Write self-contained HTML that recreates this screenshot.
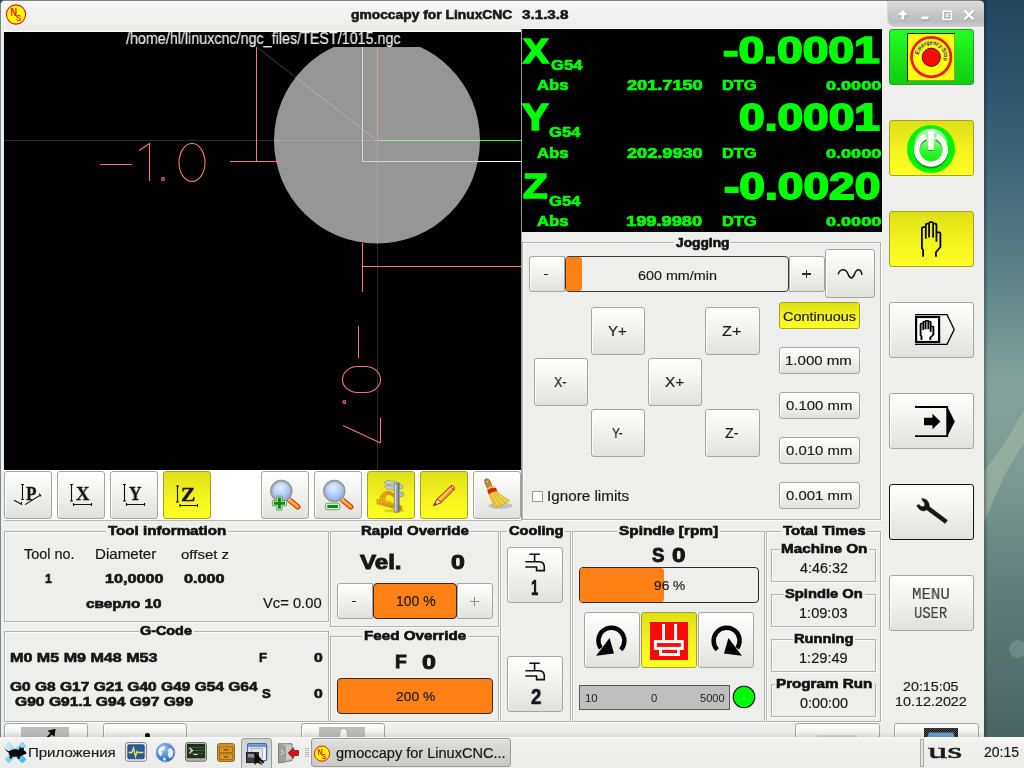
<!DOCTYPE html>
<html><head><meta charset="utf-8"><title>gmoccapy for LinuxCNC 3.1.3.8</title>
<style>
html,body{margin:0;padding:0}
body{width:1024px;height:768px;overflow:hidden;position:relative;font-family:"Liberation Sans",sans-serif;
 background:linear-gradient(180deg,#23475e 0px,#2c536a 80px,#4f7680 230px,#84a19b 384px,#7e9a94 470px,#5f7c79 600px,#4a6462 737px)}
div,span.t,svg.s{position:absolute;box-sizing:border-box}
span.t{white-space:nowrap;transform-origin:0 0;will-change:transform}
.b{border:1px solid #a6a69e;border-radius:3px}
.g{background:linear-gradient(180deg,#ffffff 0%,#f4f4f2 40%,#e0e0dc 100%);box-shadow:inset 1px 1px 0 rgba(255,255,255,.85)}
.y{background:linear-gradient(180deg,#dfdf18 0%,#f2f21e 50%,#ffff24 100%);border-color:#a4a420}
.gr{background:linear-gradient(180deg,#22ff22 0%,#18e018 60%,#12cc12 100%);border-color:#2f9a2f}
.fr{border:1px solid #b3b3ab;box-shadow:inset 1px 1px 0 #fbfbfa,1px 1px 0 #fbfbfa}
</style></head>
<body>
<svg class="s" style="left:984px;top:0px;" width="40" height="737" viewBox="0 0 40 737"><defs><linearGradient id="sh" x1="0" x2="1" y1="0" y2="0"><stop offset="0" stop-color="#000" stop-opacity=".3"/><stop offset="1" stop-color="#000" stop-opacity="0"/></linearGradient></defs>
<path d="M40 410Q30 428 21 441.700T0 471.500V523.500Q8 503 17 483T40 444Z" fill="#9cb3a2" opacity=".72"/>
<circle cx="34" cy="649" r="9" fill="#8fa5a0" opacity=".45"/>
<rect x="0" y="0" width="4" height="737" fill="url(#sh)"/></svg>
<div class="" style="left:0px;top:0px;width:984px;height:737px;background:#eeeeec;border-left:1px solid #76868e;border-top:1px solid #808080;border-radius:5px 6px 0 0"></div>
<div class="" style="left:1px;top:1px;width:983px;height:28px;background:linear-gradient(180deg,#f7f7f7,#ececeb);border-radius:4px 5px 0 0"></div>
<div class="" style="left:888px;top:1px;width:96px;height:26px;background:linear-gradient(180deg,#dcdcdc 0%,#c4c4c4 55%,#bdbdbd 80%,#cfcfcf 100%);border-radius:0 4px 0 7px;box-shadow:0 1px 0 #fafafa,-1px 0 0 #d9d9d9"></div>
<svg class="s" style="left:888px;top:0px;" width="96" height="28" viewBox="0 0 96 28"><g fill="none" stroke="#9a9a9a" stroke-width="1" transform="translate(.6,.8)" opacity=".8">
<path d="M14.9 19.8v-5.6" stroke-width="3.600"/><path d="M9.200 15.800L14.900 9.200 20.600 15.800Z" fill="#9a9a9a" stroke="none"/><rect x="33.5" y="16.7" width="7" height="2.6" fill="#9a9a9a"/><rect x="55.3" y="11.2" width="8.2" height="8.2" stroke-width="1.8"/><rect x="58" y="14" width="2.8" height="2.8" stroke-width=".9"/><path d="M76.5 10.5l9 9M85.500 10.5l-9 9" stroke-width="2.6"/></g>
<g fill="none" stroke="#fff">
<path d="M14.9 19.6v-5.6" stroke-width="2.800"/><path d="M9.900 15.300L14.900 9.700 19.900 15.300Z" fill="#fff" stroke="none"/><rect x="33.400" y="16.500" width="7.200" height="2.800" fill="#fff" stroke="none"/><rect x="55.300" y="11.200" width="8.200" height="8.200" stroke-width="1.700"/><rect x="58.200" y="14.100" width="2.500" height="2.500" stroke-width=".8"/><path d="M76.500 10.500l9 9M85.500 10.500l-9 9" stroke-width="2.300"/></g></svg>
<svg class="s" style="left:5px;top:4px;" width="22" height="22" viewBox="0 0 22 22"><circle cx="11" cy="10.500" r="9.600" fill="#ffff00" stroke="#f01010" stroke-width="1.100"/>
<text x="5.600" y="11.700" font-family="Liberation Sans" font-weight="bold" font-size="10.800" fill="#f01010" textLength="6.600" lengthAdjust="spacingAndGlyphs">N</text>
<text x="10.800" y="16.800" font-family="Liberation Sans" font-weight="bold" font-size="9.800" fill="#f01010" textLength="5.600" lengthAdjust="spacingAndGlyphs">S</text></svg>
<span class="t" style="left:351.03px;top:9px;font:bold 12.0px/1 'Liberation Sans',sans-serif;color:#1a1a1a;transform:scaleX(1.1518);-webkit-text-stroke:0.57px #1a1a1a;">gmoccapy for LinuxCNC</span>
<span class="t" style="left:521.51px;top:9px;font:bold 12.0px/1 'Liberation Sans',sans-serif;color:#1a1a1a;transform:scaleX(1.2674);-webkit-text-stroke:0.57px #1a1a1a;">3.1.3.8</span>
<div class="" style="left:4px;top:31px;width:517px;height:1px;background:#fcfcfc"></div>
<div class="" style="left:521px;top:29px;width:1px;height:491px;background:#9c9c98"></div>
<svg class="s" style="left:4px;top:32px;" width="517" height="438" viewBox="0 0 517 438"><rect width="517" height="438" fill="#000"/>
<defs><clipPath id="cc"><rect x="0" y="15" width="517" height="423"/></clipPath>
<clipPath id="ci"><circle cx="373" cy="108.500" r="103"/></clipPath></defs>
<g clip-path="url(#cc)" shape-rendering="crispEdges">
 <!-- dim cross lines on black -->
 <rect x="0" y="108" width="517" height="1" fill="#2c2c2c"/>
 <rect x="373" y="0" width="1" height="438" fill="#2c2c2c"/>
 <path d="M250 13 L373 108.500" stroke="#1b3131" stroke-width="1.200" fill="none" shape-rendering="auto"/>
 <circle cx="373" cy="108.500" r="103" fill="#969696" shape-rendering="auto"/>
 <g clip-path="url(#ci)">
  <rect x="0" y="108" width="517" height="1" fill="#a6a6a6"/>
  <rect x="373" y="0" width="1" height="438" fill="#a6a6a6"/>
 </g>
</g>
<g clip-path="url(#cc)" fill="none">
 <!-- diagonal teal line -->
 <path d="M250 13 L373 108.500" stroke="#a3aaa8" stroke-width="1.300" clip-path="url(#ci)"/>
 <g shape-rendering="crispEdges">
 <!-- white limit lines -->
 <path d="M358.500 15V129.500H517" stroke="#ffffff" stroke-width="1"/>
 <path d="M358.500 15V129.500H517" stroke="#d4d4d4" stroke-width="1" clip-path="url(#ci)"/>
 <!-- axis lines -->
 <path d="M373.500 15V108.500" stroke="#cfa2a2" stroke-width="1"/>
 <path d="M373.500 108.500H517" stroke="#33ff33" stroke-width="1"/>
 <path d="M373.500 108.500H517" stroke="#9fe59f" stroke-width="1" clip-path="url(#ci)"/>
 <!-- pink dimension lines -->
 <g stroke="#f27a7a" stroke-width="1">
  <path d="M252.500 15V129.500M226 129.500H279"/>
  <path d="M96 132.500H128"/>
  <path d="M358.500 211V260M358.500 234.500H517"/>
  <path d="M354.500 294V326"/>
  <path d="M376.500 386V411"/>
 </g></g>
 <g stroke="#f27a7a" stroke-width="1.100">
  <path d="M135 118.500L145.500 111.500V149"/>
  <circle cx="159" cy="147" r="1.400"/>
  <ellipse cx="188" cy="130.500" rx="13" ry="19"/>
  <rect x="338.500" y="334.500" width="38" height="26" rx="15" ry="13"/>
  <circle cx="340.300" cy="370" r="1.400"/>
  <path d="M339 393.500L376.500 411"/>
 </g>
</g></svg>
<span class="t" style="left:125.70px;top:31px;font:normal 16.0px/1 'Liberation Sans',sans-serif;color:#ececec;transform:scaleX(0.8949);-webkit-text-stroke:0.19px #ececec;">/home/hl/linuxcnc/ngc_files/TEST/1015.ngc</span>
<div class="" style="left:522px;top:28px;width:360px;height:1px;background:#fafafa"></div>
<div class="" style="left:522px;top:29px;width:360px;height:203px;background:#000"></div>
<span class="t" style="left:523.26px;top:34px;font:bold 35.5px/1 'Liberation Sans',sans-serif;color:#00ff00;transform:scaleX(1.0881);-webkit-text-stroke:1.68px #00ff00;">X</span>
<span class="t" style="left:551.17px;top:58px;font:bold 14.0px/1 'Liberation Sans',sans-serif;color:#00ff00;transform:scaleX(1.1856);-webkit-text-stroke:0.68px #00ff00;">G54</span>
<span class="t" style="left:723.02px;top:33px;font:bold 36.25px/1 'Liberation Sans',sans-serif;color:#00ff00;transform:scaleX(1.2748);-webkit-text-stroke:1.74px #00ff00;">-0.0001</span>
<span class="t" style="left:537.23px;top:78px;font:bold 14.75px/1 'Liberation Sans',sans-serif;color:#00ff00;transform:scaleX(1.1293);-webkit-text-stroke:0.70px #00ff00;">Abs</span>
<span class="t" style="left:626.61px;top:78px;font:bold 14.25px/1 'Liberation Sans',sans-serif;color:#00ff00;transform:scaleX(1.2735);-webkit-text-stroke:0.69px #00ff00;">201.7150</span>
<span class="t" style="left:721.79px;top:78px;font:bold 14.75px/1 'Liberation Sans',sans-serif;color:#00ff00;transform:scaleX(1.1100);-webkit-text-stroke:0.70px #00ff00;">DTG</span>
<span class="t" style="left:826.40px;top:79px;font:bold 13.25px/1 'Liberation Sans',sans-serif;color:#00ff00;transform:scaleX(1.3640);-webkit-text-stroke:0.64px #00ff00;">0.0000</span>
<span class="t" style="left:522.26px;top:100px;font:bold 36.0px/1 'Liberation Sans',sans-serif;color:#00ff00;transform:scaleX(1.1065);-webkit-text-stroke:1.70px #00ff00;">Y</span>
<span class="t" style="left:549.17px;top:126px;font:bold 13.75px/1 'Liberation Sans',sans-serif;color:#00ff00;transform:scaleX(1.2077);-webkit-text-stroke:0.66px #00ff00;">G54</span>
<span class="t" style="left:738.64px;top:100px;font:bold 36.75px/1 'Liberation Sans',sans-serif;color:#00ff00;transform:scaleX(1.2541);-webkit-text-stroke:1.77px #00ff00;">0.0001</span>
<span class="t" style="left:537.23px;top:146px;font:bold 14.75px/1 'Liberation Sans',sans-serif;color:#00ff00;transform:scaleX(1.1293);-webkit-text-stroke:0.70px #00ff00;">Abs</span>
<span class="t" style="left:626.61px;top:146px;font:bold 14.25px/1 'Liberation Sans',sans-serif;color:#00ff00;transform:scaleX(1.2735);-webkit-text-stroke:0.69px #00ff00;">202.9930</span>
<span class="t" style="left:721.79px;top:146px;font:bold 14.75px/1 'Liberation Sans',sans-serif;color:#00ff00;transform:scaleX(1.1100);-webkit-text-stroke:0.70px #00ff00;">DTG</span>
<span class="t" style="left:826.40px;top:147px;font:bold 13.25px/1 'Liberation Sans',sans-serif;color:#00ff00;transform:scaleX(1.3640);-webkit-text-stroke:0.64px #00ff00;">0.0000</span>
<span class="t" style="left:523.13px;top:169px;font:bold 35.5px/1 'Liberation Sans',sans-serif;color:#00ff00;transform:scaleX(1.1330);-webkit-text-stroke:1.68px #00ff00;">Z</span>
<span class="t" style="left:549.17px;top:194px;font:bold 14.0px/1 'Liberation Sans',sans-serif;color:#00ff00;transform:scaleX(1.1859);-webkit-text-stroke:0.67px #00ff00;">G54</span>
<span class="t" style="left:724.05px;top:168px;font:bold 37.0px/1 'Liberation Sans',sans-serif;color:#00ff00;transform:scaleX(1.2462);-webkit-text-stroke:1.78px #00ff00;">-0.0020</span>
<span class="t" style="left:537.23px;top:214px;font:bold 14.75px/1 'Liberation Sans',sans-serif;color:#00ff00;transform:scaleX(1.1293);-webkit-text-stroke:0.70px #00ff00;">Abs</span>
<span class="t" style="left:626.15px;top:214px;font:bold 14.5px/1 'Liberation Sans',sans-serif;color:#00ff00;transform:scaleX(1.2592);-webkit-text-stroke:0.69px #00ff00;">199.9980</span>
<span class="t" style="left:721.79px;top:214px;font:bold 14.75px/1 'Liberation Sans',sans-serif;color:#00ff00;transform:scaleX(1.1100);-webkit-text-stroke:0.70px #00ff00;">DTG</span>
<span class="t" style="left:826.40px;top:215px;font:bold 13.25px/1 'Liberation Sans',sans-serif;color:#00ff00;transform:scaleX(1.3640);-webkit-text-stroke:0.64px #00ff00;">0.0000</span>
<div class="b gr" style="left:889px;top:29px;width:85px;height:56px;"></div>
<svg class="s" style="left:907px;top:33px;" width="48" height="48" viewBox="0 0 48 48"><rect x=".5" y=".5" width="47.300" height="47.300" fill="#ffff10" stroke="#6a6a10" stroke-width=".8"/><path d="M.5 48V.5H48" fill="none" stroke="#1a1a00" stroke-width="1.100"/>
<circle cx="24.200" cy="24.100" r="19.700" fill="none" stroke="#f41414" stroke-width="2.700"/>
<circle cx="24.300" cy="24.300" r="9.100" fill="#fb0a0a" stroke="#4a1010" stroke-width="1"/>
<defs><path id="ep" d="M11.690 21.900A12.700 12.700 0 1 1 35.200 30.450"/></defs>
<text font-family="Liberation Sans" font-weight="bold" font-size="5.900" fill="#26268c"><textPath href="#ep" startOffset="0.3" textLength="40.500" lengthAdjust="spacingAndGlyphs">Emergency-Stop</textPath></text></svg>
<div class="b y" style="left:889px;top:120px;width:85px;height:56px;"></div>
<svg class="s" style="left:905px;top:123px;" width="52" height="52" viewBox="0 0 52 52"><defs><linearGradient id="pg" x1="0" y1="0" x2="0" y2="1"><stop offset="0" stop-color="#a8ffa8"/><stop offset=".5" stop-color="#3cf83c"/><stop offset="1" stop-color="#00f000"/></linearGradient>
<linearGradient id="pgl" x1="0" y1="0" x2="0" y2="1"><stop offset="0" stop-color="#fff" stop-opacity=".8"/><stop offset="1" stop-color="#fff" stop-opacity=".25"/></linearGradient></defs>
<circle cx="26" cy="26" r="24" fill="#00f400"/>
<circle cx="26" cy="26.700" r="13" fill="url(#pg)"/>
<path d="M20.640 13.440A14.300 14.300 0 1 0 31.360 13.440" fill="none" stroke="#085808" stroke-width="5.600" transform="translate(0,1.700)" opacity=".6"/>
<path d="M20.640 13.440A14.300 14.300 0 1 0 31.360 13.440" fill="none" stroke="#fff" stroke-width="5.600"/>
<rect x="23.200" y="7.400" width="5.700" height="20.600" fill="#0a5a0a" opacity=".5"/>
<rect x="23.200" y="6.800" width="5.700" height="20.200" fill="#fff"/>
<path d="M8.800 20.500A17.400 17.400 0 0 1 43.200 20.500Q26 10 8.800 20.500Z" fill="url(#pgl)"/></svg>
<div class="b y" style="left:889px;top:211px;width:85px;height:56px;"></div>
<svg class="s" style="left:920px;top:221px;" width="22" height="37" viewBox="0 0 22 37"><g fill="none" stroke="#000" stroke-width="1.750" stroke-linejoin="miter">
<path d="M3.100 35.700V28.800L1.900 27.400V7.400Q1.900 6 3.300 6H5"/>
<path d="M5.800 17.700V4Q5.800 2.700 7.200 2.700H8.600"/>
<path d="M9.100 16.500V2.200Q9.100 1.200 10.200 1.200H12Q13.150 1.200 13.150 2.200V16.500"/>
<path d="M13.600 2.700H15.200Q16.450 2.700 16.450 4V20.700"/>
<path d="M17 11.400H19.200Q20.400 11.400 20.400 12.600V26L15.950 31.200V35.700"/>
</g></svg>
<div class="b g" style="left:889px;top:302px;width:85px;height:56px;"></div>
<svg class="s" style="left:912px;top:312px;" width="46" height="36" viewBox="0 0 46 36"><path d="M3 2.700H35L42.200 17.500 35 32.300H3" fill="none" stroke="#000" stroke-width="1.300"/>
<rect x="4.100" y="5" width="23" height="25" fill="#fff" stroke="#000" stroke-width="2.200"/>
<g transform="translate(7.300,8.100) scale(.69,.56)"><g fill="none" stroke="#000" stroke-width="2.700" stroke-linejoin="miter">
<path d="M3.100 35.700V28.800L1.900 27.400V7.400Q1.900 6 3.300 6H5"/>
<path d="M5.800 17.700V4Q5.800 2.700 7.200 2.700H8.600"/>
<path d="M9.100 16.500V2.200Q9.100 1.200 10.200 1.200H12Q13.150 1.200 13.150 2.200V16.500"/>
<path d="M13.600 2.700H15.200Q16.450 2.700 16.450 4V20.700"/>
<path d="M17 11.400H19.200Q20.400 11.400 20.400 12.600V26L15.950 31.200V35.700"/>
</g></g></svg>
<div class="b g" style="left:889px;top:393px;width:85px;height:56px;"></div>
<svg class="s" style="left:912px;top:403px;" width="46" height="38" viewBox="0 0 46 38"><path d="M3 4H35.200V33.200H3" fill="none" stroke="#000" stroke-width="1.800"/>
<path d="M35 3.200L42.800 18.600 35 34Z" fill="#000"/>
<path d="M12 14.700H20.500V10.700L28.400 18.500 20.500 26.300V22.200H12Z" fill="#000"/></svg>
<div class="b g" style="left:889px;top:484px;width:85px;height:56px;border-color:#141414;border-width:1.500px"></div>
<svg class="s" style="left:912px;top:494px;" width="46" height="36" viewBox="0 0 46 36"><path d="M9.600 4.400Q15.400 4.600 16.900 9.400Q17.400 11.200 17.200 12.600L35.500 26.300 33.100 29.500 14.600 15.700Q9 19.500 4.600 11.600L7 10.400Q10.200 14.600 12.600 11.600Q13.600 9.400 11 7.200Z" fill="#151515" stroke="#151515" stroke-width=".5" stroke-linejoin="round"/></svg>
<div class="b g" style="left:889px;top:575px;width:85px;height:56px;"></div>
<span class="t" style="left:911.73px;top:587px;font:normal 16.25px/1 'Liberation Mono',sans-serif;color:#3c3c3c;transform:scaleX(0.9692);-webkit-text-stroke:0.15px #3c3c3c;">MENU</span>
<span class="t" style="left:913.61px;top:606px;font:normal 16.5px/1 'Liberation Mono',sans-serif;color:#3c3c3c;transform:scaleX(0.8348);-webkit-text-stroke:0.15px #3c3c3c;">USER</span>
<span class="t" style="left:902.97px;top:680px;font:normal 13.0px/1 'Liberation Sans',sans-serif;color:#1a1a1a;transform:scaleX(1.0980);-webkit-text-stroke:0.16px #1a1a1a;">20:15:05</span>
<span class="t" style="left:894.80px;top:695px;font:normal 13.5px/1 'Liberation Sans',sans-serif;color:#1a1a1a;transform:scaleX(1.0631);-webkit-text-stroke:0.16px #1a1a1a;">10.12.2022</span>
<div class="fr" style="left:522px;top:242px;width:359px;height:278px;"></div>
<div class="" style="left:673.6px;top:241px;width:56.89999999999998px;height:4px;background:#eeeeec"></div>
<span class="t" style="left:675.71px;top:236px;font:bold 13.25px/1 'Liberation Sans',sans-serif;color:#111;transform:scaleX(1.0369);-webkit-text-stroke:0.62px #111;">Jogging</span>
<div class="b g" style="left:529px;top:256px;width:36px;height:36px;border-radius:3px 0 0 3px"></div>
<div class="" style="left:544.3px;top:273.6px;width:4.2px;height:1.7px;background:#2a2a2a"></div>
<div class="" style="left:565px;top:256px;width:224px;height:36px;background:#eeeeec;border:1px solid #3a3a3a;border-radius:4px"></div>
<div class="" style="left:566px;top:257px;width:16px;height:34px;background:#ff8014;border-radius:3px"></div>
<span class="t" style="left:637.96px;top:269px;font:normal 13.25px/1 'Liberation Sans',sans-serif;color:#1a1a1a;transform:scaleX(1.0825);-webkit-text-stroke:0.16px #1a1a1a;">600 mm/min</span>
<div class="b g" style="left:789px;top:256px;width:36px;height:36px;border-radius:0 3px 3px 0"></div>
<div class="" style="left:802.2px;top:273.3px;width:8.4px;height:1.5px;background:#2a2a2a"></div>
<div class="" style="left:805.7px;top:269.9px;width:1.5px;height:8.2px;background:#2a2a2a"></div>
<div class="b g" style="left:825px;top:249px;width:50px;height:49px;"></div>
<svg class="s" style="left:836px;top:266px;" width="28" height="16" viewBox="0 0 28 16"><path d="M2.200 8.400C3.800 2.600 9.800 2 12 8C13.800 13.200 16.800 13.200 18.600 8C20.800 2 25 2.600 25.900 8.800" fill="none" stroke="#111" stroke-width="1.500"/></svg>
<div class="b g" style="left:591px;top:307px;width:54px;height:48px;"></div>
<span class="t" style="left:607.91px;top:324px;font:normal 14.0px/1 'Liberation Sans',sans-serif;color:#1a1a1a;transform:scaleX(1.0719);-webkit-text-stroke:0.17px #1a1a1a;">Y+</span>
<div class="b g" style="left:534px;top:358px;width:54px;height:48px;"></div>
<span class="t" style="left:554.37px;top:375px;font:normal 14.0px/1 'Liberation Sans',sans-serif;color:#1a1a1a;transform:scaleX(0.8934);-webkit-text-stroke:0.17px #1a1a1a;">X-</span>
<div class="b g" style="left:648px;top:358px;width:54px;height:48px;"></div>
<span class="t" style="left:665.30px;top:375px;font:normal 14.0px/1 'Liberation Sans',sans-serif;color:#1a1a1a;transform:scaleX(1.0962);-webkit-text-stroke:0.17px #1a1a1a;">X+</span>
<div class="b g" style="left:591px;top:409px;width:54px;height:48px;"></div>
<span class="t" style="left:611.99px;top:426px;font:normal 14.0px/1 'Liberation Sans',sans-serif;color:#1a1a1a;transform:scaleX(0.8361);-webkit-text-stroke:0.17px #1a1a1a;">Y-</span>
<div class="b g" style="left:705px;top:307px;width:55px;height:48px;"></div>
<span class="t" style="left:721.80px;top:324px;font:normal 14.0px/1 'Liberation Sans',sans-serif;color:#1a1a1a;transform:scaleX(1.1552);-webkit-text-stroke:0.17px #1a1a1a;">Z+</span>
<div class="b g" style="left:705px;top:409px;width:55px;height:48px;"></div>
<span class="t" style="left:725.06px;top:426px;font:normal 14.0px/1 'Liberation Sans',sans-serif;color:#1a1a1a;transform:scaleX(1.0207);-webkit-text-stroke:0.17px #1a1a1a;">Z-</span>
<div class="b y" style="left:779px;top:302px;width:81px;height:27px;"></div>
<span class="t" style="left:782.96px;top:310px;font:normal 13.0px/1 'Liberation Sans',sans-serif;color:#1a1a1a;transform:scaleX(1.1108);-webkit-text-stroke:0.16px #1a1a1a;">Continuous</span>
<div class="b g" style="left:779px;top:347px;width:81px;height:27px;"></div>
<span class="t" style="left:785.35px;top:354px;font:normal 13.5px/1 'Liberation Sans',sans-serif;color:#1a1a1a;transform:scaleX(1.1143);-webkit-text-stroke:0.16px #1a1a1a;">1.000 mm</span>
<div class="b g" style="left:779px;top:392px;width:81px;height:27px;"></div>
<span class="t" style="left:785.88px;top:399px;font:normal 13.25px/1 'Liberation Sans',sans-serif;color:#1a1a1a;transform:scaleX(1.1262);-webkit-text-stroke:0.16px #1a1a1a;">0.100 mm</span>
<div class="b g" style="left:779px;top:437px;width:81px;height:27px;"></div>
<span class="t" style="left:785.88px;top:444px;font:normal 13.25px/1 'Liberation Sans',sans-serif;color:#1a1a1a;transform:scaleX(1.1262);-webkit-text-stroke:0.16px #1a1a1a;">0.010 mm</span>
<div class="b g" style="left:779px;top:482px;width:81px;height:27px;"></div>
<span class="t" style="left:785.88px;top:489px;font:normal 13.25px/1 'Liberation Sans',sans-serif;color:#1a1a1a;transform:scaleX(1.1262);-webkit-text-stroke:0.16px #1a1a1a;">0.001 mm</span>
<div class="" style="left:532px;top:491px;width:11px;height:11px;background:#fff;border:1px solid #9a9a94"></div>
<span class="t" style="left:547.31px;top:490px;font:normal 13.75px/1 'Liberation Sans',sans-serif;color:#1a1a1a;transform:scaleX(1.1083);-webkit-text-stroke:0.16px #1a1a1a;">Ignore limits</span>
<div class="" style="left:4px;top:470px;width:517px;height:50px;background:#ffffff"></div>
<div class="" style="left:4px;top:520px;width:517px;height:1px;background:#b8b8b0"></div>
<div class="b g" style="left:4px;top:471px;width:48px;height:48px;"></div>
<div class="b g" style="left:57px;top:471px;width:48px;height:48px;"></div>
<div class="b g" style="left:110px;top:471px;width:48px;height:48px;"></div>
<div class="b y" style="left:163px;top:471px;width:48px;height:48px;"></div>
<div class="b g" style="left:261px;top:471px;width:48px;height:48px;"></div>
<div class="b g" style="left:314px;top:471px;width:48px;height:48px;"></div>
<div class="b y" style="left:367px;top:471px;width:48px;height:48px;"></div>
<div class="b y" style="left:420px;top:471px;width:48px;height:48px;"></div>
<div class="b g" style="left:473px;top:471px;width:48px;height:48px;"></div>
<svg class="s" style="left:4px;top:471px;" width="48" height="48" viewBox="0 0 48 48"><g fill="none" stroke="#111" stroke-width="1.100"><path d="M18.500 13V29M17 13.500H20M17 28.500H20"/>
<path d="M10 29.300L17.500 33.300M17.500 31V34"/><path d="M21 33.600L36.600 24M35.200 22.600L37 25.400"/></g></svg>
<span class="t" style="left:26.19px;top:484px;font:bold 19.0px/1 'Liberation Serif',sans-serif;color:#111;transform:scaleX(0.8957);-webkit-text-stroke:0.30px #111;">P</span>
<svg class="s" style="left:57px;top:471px;" width="48" height="48" viewBox="0 0 48 48"><g fill="none" stroke="#111" stroke-width="1.100"><path d="M14.500 13V30.500M13 13.500H16M13 30H16"/><path d="M16 33.500H35M16.500 32V35M34.500 32V35"/></g></svg>
<span class="t" style="left:76.08px;top:484px;font:bold 19.0px/1 'Liberation Serif',sans-serif;color:#111;transform:scaleX(0.9764);-webkit-text-stroke:0.30px #111;">X</span>
<svg class="s" style="left:110px;top:471px;" width="48" height="48" viewBox="0 0 48 48"><g fill="none" stroke="#111" stroke-width="1.100"><path d="M14.500 13V30.500M13 13.500H16M13 30H16"/><path d="M16 33.500H35M16.500 32V35M34.500 32V35"/></g></svg>
<span class="t" style="left:129.49px;top:484px;font:bold 19.0px/1 'Liberation Serif',sans-serif;color:#111;transform:scaleX(0.9077);-webkit-text-stroke:0.30px #111;">Y</span>
<svg class="s" style="left:164px;top:472px;" width="48" height="48" viewBox="0 0 48 48"><g fill="none" stroke="#111" stroke-width="1.100"><path d="M13.500 13.500V30.500M12 14H15M12 30H15"/><path d="M15.500 33.500H34M16 32V35M33.500 32V35"/></g></svg>
<span class="t" style="left:181.18px;top:485px;font:bold 19.0px/1 'Liberation Serif',sans-serif;color:#111;transform:scaleX(1.1357);-webkit-text-stroke:0.30px #111;">Z</span>
<svg class="s" style="left:261px;top:471px;" width="48" height="48" viewBox="0 0 48 48"><defs><radialGradient id="lg" cx=".45" cy=".35" r=".7"><stop offset="0" stop-color="#e4eeff"/><stop offset=".55" stop-color="#b0cdfc"/><stop offset="1" stop-color="#7fa9f0"/></radialGradient>
<linearGradient id="hg" x1="0" y1="0" x2="1" y2="0"><stop offset="0" stop-color="#f8a040"/><stop offset=".5" stop-color="#ffc060"/><stop offset="1" stop-color="#e86010"/></linearGradient></defs><g><path d="M28.600 29.200L36.800 35.800" stroke="#d4480c" stroke-width="5.400" stroke-linecap="round"/><path d="M28.800 29.400L36.600 35.600" stroke="#ffae38" stroke-width="2.800" stroke-linecap="round"/>
<path d="M26.500 26.800L29.200 29.400" stroke="#c4c4c4" stroke-width="3.800"/>
<circle cx="20.300" cy="20" r="9.900" fill="url(#lg)" stroke="#a8a8a8" stroke-width="2"/><circle cx="20.300" cy="20" r="10.900" fill="none" stroke="#808080" stroke-width=".7"/></g><path d="M15.800 25.200h5.200v4.400h4.400v5.200h-4.400v4.400h-5.200v-4.400h-4.400v-5.200h4.400z" fill="#e6f2e6" stroke="#4e9e4e" stroke-width=".9" stroke-linejoin="round"/>
<path d="M16.900 26.600h3v4.100h4.100v3h-4.100v4.100h-3v-4.100h-4.100v-3h4.100z" fill="#0c8c0c"/></svg>
<svg class="s" style="left:314px;top:471px;" width="48" height="48" viewBox="0 0 48 48"><g><path d="M28.600 29.200L36.800 35.800" stroke="#d4480c" stroke-width="5.400" stroke-linecap="round"/><path d="M28.800 29.400L36.600 35.600" stroke="#ffae38" stroke-width="2.800" stroke-linecap="round"/>
<path d="M26.500 26.800L29.200 29.400" stroke="#c4c4c4" stroke-width="3.800"/>
<circle cx="20.300" cy="20" r="9.900" fill="url(#lg)" stroke="#a8a8a8" stroke-width="2"/><circle cx="20.300" cy="20" r="10.900" fill="none" stroke="#808080" stroke-width=".7"/></g><rect x="11.400" y="32.200" width="14.400" height="6.600" rx="2" fill="#e6f2e6" stroke="#4e9e4e" stroke-width=".9"/><rect x="13.200" y="34" width="10.800" height="3" rx=".8" fill="#0c8c0c"/></svg>
<svg class="s" style="left:367px;top:471px;" width="48" height="48" viewBox="0 0 48 48"><defs><linearGradient id="cg" x1="0" y1="0" x2="1" y2="0"><stop offset="0" stop-color="#c8d2d8"/><stop offset=".45" stop-color="#a4b0b8"/><stop offset="1" stop-color="#5c6c78"/></linearGradient>
<linearGradient id="og" x1="0" y1="0" x2="1" y2="0"><stop offset="0" stop-color="#f4b020"/><stop offset="1" stop-color="#e08808"/></linearGradient></defs>
<ellipse cx="27" cy="39.800" rx="11" ry="1.600" fill="#8a8a10" opacity=".35"/>
<path d="M12.600 28.200Q13.800 21 20.500 20.200Q24.500 20.200 27.500 23.500V31Z" fill="url(#og)" stroke="#c88410" stroke-width=".6"/>
<path d="M18 28.800Q19 24.200 22.600 24Q25 24.400 27.200 27.600V31.200Z" fill="#eeee1a"/>
<path d="M10 28.400L34.700 35V39.400L10 32.800Z" fill="url(#og)" stroke="#c07c0c" stroke-width=".6"/>
<path d="M13 31.200v2M16 32v2M19 32.800v2M22 33.600v2M25 34.400v2M15 25l1 .8M17.300 22.600l.8 1M20.400 21.400l.2 1.200M23.400 21.800l-.5 1.200" stroke="#b06c08" stroke-width=".7" fill="none"/>
<path d="M17.200 11.500L20 9.500 28.500 10.300 31.500 12 35.600 14.600 35.600 17.400 32.400 18 31 14.200 27 13.600 19.500 13.600Z" fill="#c0cad2" stroke="#7c8a96" stroke-width=".6"/>
<path d="M17.200 15.400L20 14 27.400 16V19.600L19.500 17.600Z" fill="#c0cad2" stroke="#7c8a96" stroke-width=".6"/>
<rect x="27.200" y="12" width="5" height="29.200" fill="url(#cg)" stroke="#5c6a76" stroke-width=".5"/>
<path d="M28.400 14V40" stroke="#e0e8ec" stroke-width=".8" opacity=".8"/>
<circle cx="34.300" cy="23.400" r="2.300" fill="#b4bec6" stroke="#6c7a86" stroke-width=".6"/></svg>
<svg class="s" style="left:420px;top:471px;" width="48" height="48" viewBox="0 0 48 48"><path d="M13.700 34.500L17.200 28 30.800 15Q34.600 13.600 34 18.600L20.800 31.800Z" fill="#ff9a1c" stroke="#b0201c" stroke-width="1"/>
<path d="M18.600 28.200L31 16.200 32.400 17 19.800 29.400Z" fill="#ffd66a"/>
<path d="M30.800 15Q34.600 13.600 34 18.600Q31.400 18 30.800 15Z" fill="#f6e4dc" stroke="#c03028" stroke-width=".9"/>
<path d="M13.700 34.500L17.200 28Q19.800 29 20.800 31.800Z" fill="#f4d8b0" stroke="#b0201c" stroke-width=".8"/>
<path d="M13.700 34.500L15.200 31.700 16.800 33.200Z" fill="#333"/></svg>
<svg class="s" style="left:473px;top:471px;" width="48" height="48" viewBox="0 0 48 48"><ellipse cx="27.500" cy="34.800" rx="12" ry="3.200" fill="#8a8a86" opacity=".4"/>
<path d="M12 11.500Q10.800 8 13.500 7.800Q16.200 7.600 17 10.500L19.500 17 15 18.800Z" fill="#c88a3c" stroke="#9a5e18" stroke-width=".9"/>
<circle cx="14.300" cy="10.800" r="1.300" fill="#f0dcc0" stroke="#9a5e18" stroke-width=".5"/>
<path d="M13.600 18.600Q18 15.400 22.200 15.600" fill="none" stroke="#f0cc38" stroke-width="1.500"/>
<path d="M14.600 19.600Q18.500 16.800 22.800 17L24 20.600Q19.500 20.400 16 23.400Z" fill="#e01818" stroke="#a01010" stroke-width=".5"/>
<path d="M16 23.400Q19.500 20.400 24 20.600Q29 25.500 36.500 29.500Q31 34.500 22 36.600Q19 30.500 16 23.400Z" fill="#f0d040" stroke="#c8a018" stroke-width=".7"/>
<path d="M18 23.600Q20.500 30 24.500 36M20 22.600Q24 29.500 28.500 34.600M22 21.800Q26.500 28 32.500 32.400" fill="none" stroke="#c8a018" stroke-width=".7"/></svg>
<div class="fr" style="left:4px;top:531px;width:325px;height:91px;"></div>
<div class="" style="left:105.8px;top:530px;width:121.8px;height:4px;background:#eeeeec"></div>
<span class="t" style="left:107.96px;top:524px;font:bold 13.0px/1 'Liberation Sans',sans-serif;color:#111;transform:scaleX(1.1639);-webkit-text-stroke:0.62px #111;">Tool information</span>
<span class="t" style="left:24.19px;top:548px;font:normal 13.75px/1 'Liberation Sans',sans-serif;color:#161616;transform:scaleX(1.0498);-webkit-text-stroke:0.17px #161616;">Tool no.</span>
<span class="t" style="left:95.47px;top:548px;font:normal 13.75px/1 'Liberation Sans',sans-serif;color:#161616;transform:scaleX(1.0989);-webkit-text-stroke:0.17px #161616;">Diameter</span>
<span class="t" style="left:180.98px;top:548px;font:normal 13.5px/1 'Liberation Sans',sans-serif;color:#161616;transform:scaleX(1.1112);-webkit-text-stroke:0.17px #161616;">offset z</span>
<span class="t" style="left:45.17px;top:572px;font:bold 13.0px/1 'Liberation Sans',sans-serif;color:#161616;transform:scaleX(0.9475);-webkit-text-stroke:0.61px #161616;">1</span>
<span class="t" style="left:105.34px;top:572px;font:bold 13.25px/1 'Liberation Sans',sans-serif;color:#161616;transform:scaleX(1.2212);-webkit-text-stroke:0.62px #161616;">10,0000</span>
<span class="t" style="left:184.37px;top:572px;font:bold 13.0px/1 'Liberation Sans',sans-serif;color:#161616;transform:scaleX(1.2483);-webkit-text-stroke:0.63px #161616;">0.000</span>
<span class="t" style="left:86.00px;top:597px;font:bold 13.5px/1 'Liberation Sans',sans-serif;color:#161616;transform:scaleX(1.1381);-webkit-text-stroke:0.64px #161616;">сверло 10</span>
<span class="t" style="left:263.41px;top:597px;font:normal 13.75px/1 'Liberation Sans',sans-serif;color:#161616;transform:scaleX(1.0726);-webkit-text-stroke:0.17px #161616;">Vc= 0.00</span>
<div class="fr" style="left:4px;top:631px;width:325px;height:91px;"></div>
<div class="" style="left:138.6px;top:630px;width:55.400000000000006px;height:4px;background:#eeeeec"></div>
<span class="t" style="left:140.33px;top:625px;font:bold 12.75px/1 'Liberation Sans',sans-serif;color:#111;transform:scaleX(1.1267);-webkit-text-stroke:0.62px #111;">G-Code</span>
<span class="t" style="left:9.86px;top:651px;font:bold 13.0px/1 'Liberation Sans',sans-serif;color:#161616;transform:scaleX(1.2373);-webkit-text-stroke:0.61px #161616;">M0 M5 M9 M48 M53</span>
<span class="t" style="left:9.99px;top:681px;font:bold 12.75px/1 'Liberation Sans',sans-serif;color:#161616;transform:scaleX(1.2174);-webkit-text-stroke:0.62px #161616;">G0 G8 G17 G21 G40 G49 G54 G64</span>
<span class="t" style="left:15.08px;top:696px;font:bold 12.75px/1 'Liberation Sans',sans-serif;color:#161616;transform:scaleX(1.2269);-webkit-text-stroke:0.62px #161616;">G90 G91.1 G94 G97 G99</span>
<span class="t" style="left:259.47px;top:651px;font:bold 13.0px/1 'Liberation Sans',sans-serif;color:#161616;transform:scaleX(0.9939);-webkit-text-stroke:0.61px #161616;">F</span>
<span class="t" style="left:314.09px;top:651px;font:bold 13.0px/1 'Liberation Sans',sans-serif;color:#161616;transform:scaleX(1.2097);-webkit-text-stroke:0.63px #161616;">0</span>
<span class="t" style="left:262.43px;top:687px;font:bold 13.5px/1 'Liberation Sans',sans-serif;color:#161616;transform:scaleX(0.9692);-webkit-text-stroke:0.65px #161616;">S</span>
<span class="t" style="left:314.09px;top:687px;font:bold 13.0px/1 'Liberation Sans',sans-serif;color:#161616;transform:scaleX(1.2097);-webkit-text-stroke:0.63px #161616;">0</span>
<div class="fr" style="left:330px;top:531px;width:169px;height:96px;"></div>
<div class="" style="left:359.5px;top:530px;width:110.89999999999998px;height:4px;background:#eeeeec"></div>
<span class="t" style="left:360.83px;top:524px;font:bold 13.0px/1 'Liberation Sans',sans-serif;color:#111;transform:scaleX(1.1564);-webkit-text-stroke:0.62px #111;">Rapid Override</span>
<span class="t" style="left:360.15px;top:553px;font:bold 19.75px/1 'Liberation Sans',sans-serif;color:#161616;transform:scaleX(1.2203);-webkit-text-stroke:0.93px #161616;">Vel.</span>
<span class="t" style="left:450.98px;top:552px;font:bold 20.0px/1 'Liberation Sans',sans-serif;color:#161616;transform:scaleX(1.2465);-webkit-text-stroke:0.96px #161616;">0</span>
<div class="b g" style="left:337px;top:583px;width:36px;height:36px;border-radius:3px 0 0 3px"></div>
<div class="" style="left:352px;top:600.7px;width:4.2px;height:1.7px;background:#2a2a2a"></div>
<div class="" style="left:373px;top:583px;width:84px;height:36px;background:#ff8014;border:1px solid #3a2a1a;border-radius:4px"></div>
<span class="t" style="left:395.84px;top:595px;font:normal 13.75px/1 'Liberation Sans',sans-serif;color:#1a1a1a;transform:scaleX(1.0151);-webkit-text-stroke:0.16px #1a1a1a;">100 %</span>
<div class="b g" style="left:457px;top:583px;width:36px;height:36px;border-radius:0 3px 3px 0"></div>
<div class="" style="left:470.4px;top:600.9px;width:9px;height:1.1px;background:#8c8c8c"></div>
<div class="" style="left:474.4px;top:596.9px;width:1.1px;height:9px;background:#8c8c8c"></div>
<div class="fr" style="left:330px;top:636px;width:169px;height:86px;"></div>
<div class="" style="left:362.3px;top:635px;width:105.30000000000001px;height:4px;background:#eeeeec"></div>
<span class="t" style="left:363.62px;top:629px;font:bold 13.0px/1 'Liberation Sans',sans-serif;color:#111;transform:scaleX(1.1690);-webkit-text-stroke:0.62px #111;">Feed Override</span>
<span class="t" style="left:394.85px;top:652px;font:bold 19.25px/1 'Liberation Sans',sans-serif;color:#161616;transform:scaleX(0.9664);-webkit-text-stroke:0.91px #161616;">F</span>
<span class="t" style="left:422.27px;top:653px;font:bold 19.5px/1 'Liberation Sans',sans-serif;color:#161616;transform:scaleX(1.2806);-webkit-text-stroke:0.94px #161616;">0</span>
<div class="" style="left:337px;top:678px;width:156px;height:36px;background:#ff8014;border:1px solid #3a2a1a;border-radius:4px"></div>
<span class="t" style="left:396.19px;top:690px;font:normal 13.25px/1 'Liberation Sans',sans-serif;color:#1a1a1a;transform:scaleX(1.0439);-webkit-text-stroke:0.16px #1a1a1a;">200 %</span>
<div class="fr" style="left:500px;top:531px;width:71px;height:191px;"></div>
<div class="" style="left:507.3px;top:530px;width:57.49999999999994px;height:4px;background:#eeeeec"></div>
<span class="t" style="left:509.02px;top:525px;font:bold 12.75px/1 'Liberation Sans',sans-serif;color:#111;transform:scaleX(1.1474);-webkit-text-stroke:0.62px #111;">Cooling</span>
<div class="b g" style="left:507px;top:547px;width:56px;height:56px;"></div>
<svg class="s" style="left:525px;top:553.4px;" width="22" height="20" viewBox="0 0 22 20"><g fill="none" stroke="#111" stroke-width="1.600"><path d="M4.400 1.300H14.800M9.600 1.300V8.800"/>
<path d="M.4 8.800H14.500Q19.300 9.300 19.300 14V17.600H11.600V14H.4"/></g></svg>
<span class="t" style="left:530.51px;top:577px;font:bold 22.25px/1 'Liberation Sans',sans-serif;color:#161616;transform:scaleX(0.5929);-webkit-text-stroke:0.60px #161616;">1</span>
<div class="b g" style="left:507px;top:656px;width:56px;height:56px;"></div>
<svg class="s" style="left:525px;top:662.4px;" width="22" height="20" viewBox="0 0 22 20"><g fill="none" stroke="#111" stroke-width="1.600"><path d="M4.400 1.300H14.800M9.600 1.300V8.800"/>
<path d="M.4 8.800H14.500Q19.300 9.300 19.300 14V17.600H11.600V14H.4"/></g></svg>
<span class="t" style="left:530.70px;top:687px;font:bold 21.5px/1 'Liberation Sans',sans-serif;color:#161616;transform:scaleX(0.8624);-webkit-text-stroke:0.70px #161616;">2</span>
<div class="fr" style="left:572px;top:531px;width:193px;height:191px;"></div>
<div class="" style="left:617.3px;top:530px;width:102.30000000000007px;height:4px;background:#eeeeec"></div>
<span class="t" style="left:619.15px;top:525px;font:bold 12.75px/1 'Liberation Sans',sans-serif;color:#111;transform:scaleX(1.2056);-webkit-text-stroke:0.62px #111;">Spindle [rpm]</span>
<span class="t" style="left:652.13px;top:545px;font:bold 20.0px/1 'Liberation Sans',sans-serif;color:#161616;transform:scaleX(0.9280);-webkit-text-stroke:0.96px #161616;">S</span>
<span class="t" style="left:672.31px;top:545px;font:bold 20.0px/1 'Liberation Sans',sans-serif;color:#161616;transform:scaleX(1.2143);-webkit-text-stroke:0.96px #161616;">0</span>
<div class="" style="left:579px;top:567px;width:180px;height:36px;background:#eeeeec;border:1px solid #2a2a2a;border-radius:4px"></div>
<div class="" style="left:580px;top:568px;width:83.5px;height:34px;background:#ff8014;border-radius:3px"></div>
<span class="t" style="left:653.86px;top:580px;font:normal 12.75px/1 'Liberation Sans',sans-serif;color:#1a1a1a;transform:scaleX(1.0782);-webkit-text-stroke:0.16px #1a1a1a;">96 %</span>
<div class="b g" style="left:584px;top:612px;width:56px;height:56px;"></div>
<div class="b y" style="left:641px;top:612px;width:56px;height:56px;"></div>
<div class="b g" style="left:698px;top:612px;width:56px;height:56px;"></div>
<svg class="s" style="left:588px;top:616px;" width="48" height="48" viewBox="0 0 48 48"><path d="M32.750 33.730A13 13 0 1 0 12.750 32.160" fill="none" stroke="#000" stroke-width="4.400"/><path d="M8.100 39.700L21.600 21.900 26 37.500Z" fill="#000"/></svg>
<svg class="s" style="left:702px;top:616px;" width="48" height="48" viewBox="0 0 48 48"><g transform="translate(48,0) scale(-1,1)"><path d="M32.750 33.730A13 13 0 1 0 12.750 32.160" fill="none" stroke="#000" stroke-width="4.400"/><path d="M8.100 39.700L21.600 21.900 26 37.500Z" fill="#000"/></g></svg>
<div class="" style="left:650px;top:622px;width:38px;height:38px;background:#fb0808"></div>
<svg class="s" style="left:650px;top:622px;" width="38" height="38" viewBox="0 0 38 38"><g fill="#fff"><rect x="12.100" y="1.900" width="2.900" height="16.800"/><rect x="24.100" y="1.900" width="3" height="16.800"/></g>
<g fill="none" stroke="#fff" stroke-width="3"><rect x="5.400" y="19.600" width="26.900" height="6.800"/><path d="M10.500 26.400V32.400H28.500V26.400"/></g></svg>
<div class="" style="left:579px;top:685px;width:151px;height:25px;background:#bfbfbf;border:1px solid #5a5a5a"></div>
<span class="t" style="left:584.94px;top:694px;font:normal 10.25px/1 'Liberation Sans',sans-serif;color:#222;transform:scaleX(1.1122);">10</span>
<span class="t" style="left:651.35px;top:694px;font:normal 10.25px/1 'Liberation Sans',sans-serif;color:#222;transform:scaleX(1.0976);">0</span>
<span class="t" style="left:699.96px;top:694px;font:normal 10.25px/1 'Liberation Sans',sans-serif;color:#222;transform:scaleX(1.0754);">5000</span>
<svg class="s" style="left:732px;top:685px;" width="25" height="25" viewBox="0 0 25 25"><circle cx="12" cy="12" r="10.800" fill="#00f800" stroke="#111" stroke-width="1.100"/></svg>
<div class="fr" style="left:766px;top:531px;width:115px;height:191px;"></div>
<div class="" style="left:781px;top:530px;width:86.39999999999998px;height:4px;background:#eeeeec"></div>
<span class="t" style="left:783.16px;top:524px;font:bold 13.0px/1 'Liberation Sans',sans-serif;color:#111;transform:scaleX(1.1618);-webkit-text-stroke:0.62px #111;">Total Times</span>
<div class="fr" style="left:771px;top:549px;width:105px;height:33px;"></div>
<div class="" style="left:779.7px;top:548px;width:89.0px;height:4px;background:#eeeeec"></div>
<span class="t" style="left:781.01px;top:543px;font:bold 12.5px/1 'Liberation Sans',sans-serif;color:#111;transform:scaleX(1.2189);-webkit-text-stroke:0.59px #111;">Machine On</span>
<span class="t" style="left:800.10px;top:561px;font:normal 14.0px/1 'Liberation Sans',sans-serif;color:#161616;transform:scaleX(1.0267);-webkit-text-stroke:0.17px #161616;">4:46:32</span>
<div class="fr" style="left:771px;top:594px;width:105px;height:33px;"></div>
<div class="" style="left:783.5px;top:593px;width:81.0px;height:4px;background:#eeeeec"></div>
<span class="t" style="left:785.35px;top:588px;font:bold 12.25px/1 'Liberation Sans',sans-serif;color:#111;transform:scaleX(1.2030);-webkit-text-stroke:0.59px #111;">Spindle On</span>
<span class="t" style="left:799.29px;top:606px;font:normal 14.0px/1 'Liberation Sans',sans-serif;color:#161616;transform:scaleX(1.0411);-webkit-text-stroke:0.17px #161616;">1:09:03</span>
<div class="fr" style="left:771px;top:639px;width:105px;height:33px;"></div>
<div class="" style="left:792.7px;top:638px;width:62.09999999999991px;height:4px;background:#eeeeec"></div>
<span class="t" style="left:794.04px;top:633px;font:bold 12.5px/1 'Liberation Sans',sans-serif;color:#111;transform:scaleX(1.1721);-webkit-text-stroke:0.59px #111;">Running</span>
<span class="t" style="left:799.29px;top:651px;font:normal 14.0px/1 'Liberation Sans',sans-serif;color:#161616;transform:scaleX(1.0427);-webkit-text-stroke:0.17px #161616;">1:29:49</span>
<div class="fr" style="left:771px;top:684px;width:105px;height:33px;"></div>
<div class="" style="left:774.7px;top:683px;width:98.89999999999998px;height:4px;background:#eeeeec"></div>
<span class="t" style="left:776.01px;top:678px;font:bold 12.5px/1 'Liberation Sans',sans-serif;color:#111;transform:scaleX(1.2149);-webkit-text-stroke:0.59px #111;">Program Run</span>
<span class="t" style="left:799.81px;top:697px;font:normal 13.75px/1 'Liberation Sans',sans-serif;color:#161616;transform:scaleX(1.0470);-webkit-text-stroke:0.17px #161616;">0:00:00</span>
<div class="b g" style="left:4px;top:723px;width:84px;height:20px;"></div>
<div class="b g" style="left:103px;top:723px;width:84px;height:20px;"></div>
<div class="b g" style="left:301px;top:723px;width:84px;height:20px;"></div>
<div class="b g" style="left:795px;top:723px;width:85px;height:20px;"></div>
<div class="b g" style="left:894px;top:723px;width:85px;height:20px;"></div>
<div class="" style="left:21px;top:727px;width:48px;height:12px;background:#bdbdbd"></div>
<svg class="s" style="left:44px;top:729px;" width="14" height="9" viewBox="0 0 14 9"><path d="M3 9L8.500 3.500M5.500 2.200L10.500 1 9.800 6Z" fill="#000" stroke="#000" stroke-width="1.800"/></svg>
<div class="" style="left:145px;top:733px;width:5px;height:5px;background:#111;border-radius:2px 2px 0 0"></div>
<div class="" style="left:319px;top:727px;width:46px;height:12px;background:#bdbdbd"></div>
<svg class="s" style="left:338px;top:728px;" width="11" height="10" viewBox="0 0 11 10"><path d="M1 10L2.500 1.500Q5.500 -.5 8.500 1.500L10 10Z" fill="#f4f4f4" stroke="#999" stroke-width=".6"/></svg>
<div class="" style="left:817px;top:735px;width:40px;height:3px;background:#d4d4d6;border-radius:2px 2px 0 0"></div>
<svg class="s" style="left:924px;top:728px;" width="34" height="10" viewBox="0 0 34 10"><defs><pattern id="ck" width="2" height="2" patternUnits="userSpaceOnUse"><rect width="2" height="2" fill="#555"/><rect width="1" height="1" fill="#111"/><rect x="1" y="1" width="1" height="1" fill="#111"/></pattern></defs>
<rect width="34" height="10" fill="url(#ck)"/><path d="M3 10L5 4.500H29L31 10Z" fill="#6aa0d0"/></svg>
<div class="" style="left:0px;top:731px;width:984px;height:6px;background:linear-gradient(180deg,rgba(0,0,0,0),rgba(0,0,0,.075))"></div>
<div class="" style="left:0px;top:737px;width:1024px;height:31px;background:linear-gradient(180deg,#f6f6f5 0%,#efefed 25%,#ececea 100%)"></div>
<svg class="s" style="left:4px;top:741px;" width="23" height="23" viewBox="0 0 23 23"><defs><linearGradient id="xg" x1="0" y1="0" x2="1" y2="1"><stop offset="0" stop-color="#c4ecfa"/><stop offset=".5" stop-color="#86d0ee"/><stop offset="1" stop-color="#4cb4e2"/></linearGradient></defs>
<path d="M2.600 2.600L20.400 20.400M20.400 2.600L2.600 20.400" stroke="url(#xg)" stroke-width="5.800" fill="none"/>
<path d="M2 3.200L11.500 12.700 21 3.200" fill="none" stroke="#d8f2fc" stroke-width="1" opacity=".8"/>
<path d="M.4 6.800Q2.500 9.800 5.200 10.200Q7.500 8 11.500 8.200Q13.500 8.200 15 8.800Q15.200 6.600 16.400 5.800Q17.400 6.400 17.600 7.600Q18.600 6.400 19.800 6.600Q20 8 19.600 9Q22 10.600 22.700 12.200Q21.500 13.400 19.500 13.800Q18 15.200 16 15.400L15.600 17.800H13.400L13.600 15.600Q10.500 16 8.200 15.400L7.800 17.600H5.600L5.900 14.600Q4.400 13.200 4.600 11.400Q2 10.400 .4 6.800Z" fill="#080808"/></svg>
<span class="t" style="left:28.48px;top:746px;font:normal 13.5px/1 'Liberation Sans',sans-serif;color:#1c1c1c;transform:scaleX(1.1106);-webkit-text-stroke:0.16px #1c1c1c;">Приложения</span>
<svg class="s" style="left:125px;top:742px;" width="22" height="20" viewBox="0 0 22 20"><rect x=".6" y=".6" width="20.800" height="18.600" rx="2.600" fill="#f4f4f4" stroke="#7a7a7a" stroke-width="1"/>
<rect x="2.800" y="2.800" width="16.400" height="14" rx="1" fill="#2c5a9c" stroke="#1c3c74" stroke-width=".8"/>
<path d="M3.500 10.500H7L8.500 6 10.500 14.500 12 9.500 13 10.500H18.500" fill="none" stroke="#e8e84a" stroke-width="1.300"/></svg>
<svg class="s" style="left:155px;top:742px;" width="22" height="22" viewBox="0 0 22 22"><defs><radialGradient id="gg" cx=".4" cy=".3" r=".75"><stop offset="0" stop-color="#9cc4f4"/><stop offset=".6" stop-color="#4a86d8"/><stop offset="1" stop-color="#2a5cac"/></radialGradient></defs>
<circle cx="10.500" cy="10.600" r="9.400" fill="url(#gg)" stroke="#8aa4cc" stroke-width=".9"/>
<path d="M5 5.500Q8 3 10.500 4.500L9 8 6.500 9.500 7.500 12 5.500 14.500 3 11Q2.500 7.500 5 5.500ZM12.500 7.500L16 6 18.500 9.500 17.500 14.500 14.500 16.500 12.500 13 13.500 10.500ZM8.500 15.500L11 16.500 10.500 19 8 18Z" fill="#f2f6fa" opacity=".92"/></svg>
<svg class="s" style="left:185px;top:742px;" width="22" height="20" viewBox="0 0 22 20"><rect x=".6" y=".6" width="20.800" height="18.600" rx="2" fill="#b8b8b4" stroke="#6a6a66" stroke-width="1"/>
<rect x="2.600" y="2.400" width="16.800" height="13.400" fill="#1c3418" stroke="#0c1c0c" stroke-width=".8"/>
<path d="M3 5.500H19M3 8.500H19M3 11.500H19" stroke="#3c5c34" stroke-width="1.200"/>
<path d="M4.500 6L7.500 8.500 4.500 11M8.500 12.500H12.500" fill="none" stroke="#f0f0f0" stroke-width="1.200"/><circle cx="15.500" cy="17.600" r=".8" fill="#5c5"/></svg>
<svg class="s" style="left:217px;top:743px;" width="18" height="19" viewBox="0 0 18 19"><rect x=".6" y=".6" width="16.800" height="17.800" rx="2" fill="#c89838" stroke="#8a6418" stroke-width="1"/>
<rect x="2.500" y="4" width="13" height="5.500" fill="#e09820" stroke="#8a5c10" stroke-width=".7"/><rect x="2.500" y="11" width="13" height="5.500" fill="#e09820" stroke="#8a5c10" stroke-width=".7"/>
<path d="M6.500 6.800H11.500M6.500 13.800H11.500" stroke="#6a440c" stroke-width="1.200"/></svg>
<div class="" style="left:241px;top:738px;width:31px;height:32px;background:linear-gradient(180deg,#d0d0ce,#dededc);border:1px solid #9c9c98;border-radius:3px 3px 0 0"></div>
<svg class="s" style="left:246px;top:742px;" width="24" height="25" viewBox="0 0 24 25"><rect x="1.600" y="1.600" width="19" height="17" rx="1.500" fill="#f4f4f4" stroke="#3c6cb4" stroke-width="1.300"/><rect x="2.200" y="2.200" width="17.800" height="3" fill="#6c94d0"/>
<rect x="5" y="6.500" width="11.500" height="9.500" fill="#e4e4e4" stroke="#9a9a9a" stroke-width=".7"/>
<rect x="0.500" y="10.500" width="12" height="10" fill="#3a3e44" stroke="#16181c" stroke-width=".9"/><rect x="2" y="12" width="7" height="3.500" fill="#8a9098"/>
<path d="M8.500 11.500V23L11.500 20.500 16.500 23.500Z" fill="#0a0a0a"/><path d="M8.500 11.500L17.500 21" stroke="#0a0a0a" stroke-width="2.200"/></svg>
<svg class="s" style="left:277px;top:743px;" width="24" height="21" viewBox="0 0 24 21"><path d="M1.500 .8H15V17.500L1.500 20Z" fill="#c8c8c6" stroke="#6c6c6a" stroke-width=".9"/><path d="M1.500 .8L9 3V19L1.500 20Z" fill="#8c8c8a" opacity=".7"/>
<path d="M4 7L6.500 9.500 4 12" fill="none" stroke="#eee" stroke-width="1"/>
<path d="M11.200 10L16.500 4.800V7.500H21.500V12.500H16.500V15.200Z" fill="#e01414" stroke="#8c0c0c" stroke-width=".8"/></svg>
<div class="" style="left:305px;top:748px;width:4px;height:1px;background:#b4b4b0"></div>
<div class="" style="left:305px;top:750px;width:4px;height:1px;background:#b4b4b0"></div>
<div class="" style="left:305px;top:752px;width:4px;height:1px;background:#b4b4b0"></div>
<div class="" style="left:305px;top:754px;width:4px;height:1px;background:#b4b4b0"></div>
<div class="" style="left:305px;top:756px;width:4px;height:1px;background:#b4b4b0"></div>
<div class="" style="left:311px;top:738px;width:200px;height:29px;background:linear-gradient(180deg,#e0e0de 0%,#d2d2d0 50%,#c9c9c7 100%);border:1px solid #9a9a96;border-radius:3px;box-shadow:inset 0 1px 0 #ececea"></div>
<svg class="s" style="left:313px;top:745px;" width="18" height="18" viewBox="0 0 18 18"><circle cx="9" cy="8.600" r="7.600" fill="#ffff00" stroke="#f01010" stroke-width="1"/>
<text x="4.600" y="9.600" font-family="Liberation Sans" font-weight="bold" font-size="8.600" fill="#f01010" textLength="5.200" lengthAdjust="spacingAndGlyphs">N</text>
<text x="8.700" y="13.700" font-family="Liberation Sans" font-weight="bold" font-size="8" fill="#f01010" textLength="4.500" lengthAdjust="spacingAndGlyphs">S</text></svg>
<span class="t" style="left:336.10px;top:746px;font:normal 14.0px/1 'Liberation Sans',sans-serif;color:#141414;transform:scaleX(1.0376);-webkit-text-stroke:0.17px #141414;">gmoccapy for LinuxCNC...</span>
<div class="" style="left:920px;top:739px;width:4px;height:28px;background:#e4e4e2;border:1px solid #a8a8a4"></div>
<span class="t" style="left:928.25px;top:741px;font:normal 20.0px/1 'Liberation Serif',sans-serif;color:#1a1a1a;transform:scaleX(1.9256);-webkit-text-stroke:0.45px #1a1a1a;">us</span>
<span class="t" style="left:984.38px;top:746px;font:normal 13.75px/1 'Liberation Sans',sans-serif;color:#1a1a1a;transform:scaleX(1.0210);-webkit-text-stroke:0.17px #1a1a1a;">20:15</span>
</body></html>
